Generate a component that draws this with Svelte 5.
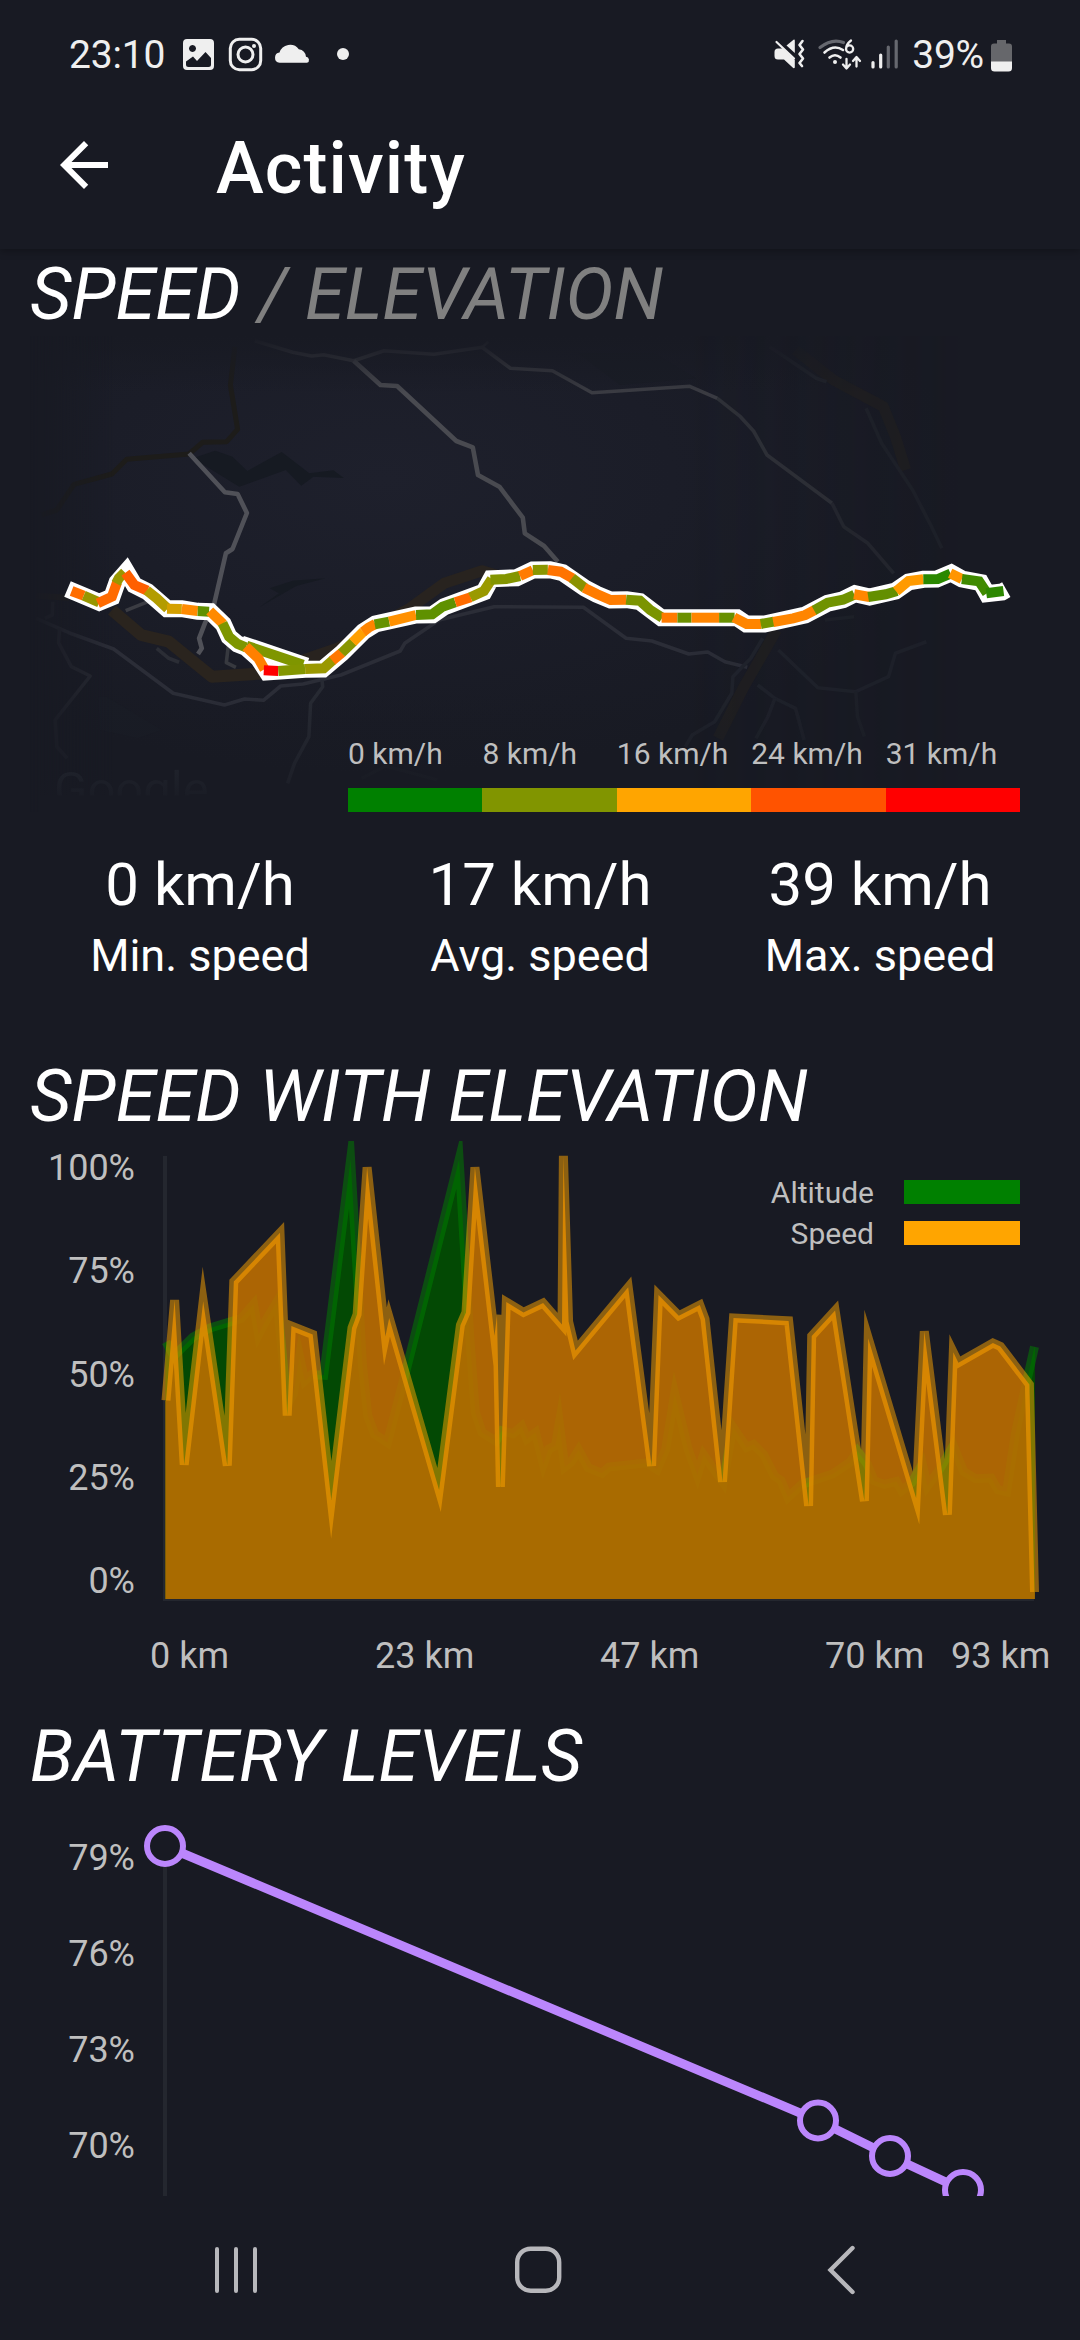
<script>
  const SX = 2.9037;
  const CHART_SY = 2.7034;
  const MAP_SY = 3;

  const toPoints = (pts, sy, top) =>
    pts.map(([x, y]) => `${(x / SX).toFixed(1)},${(y / sy + top).toFixed(1)}`).join(' ');
  const chart = (pts) => toPoints(pts, CHART_SY, 1120);
  const map = (pts) => toPoints(pts, MAP_SY, 330);

  const speed = [
    [482, 758], [507, 487], [535, 932], [590, 490], [660, 934], [679, 437], [813, 305], [834, 799],
    [846, 557], [908, 580], [962, 1027], [1022, 562], [1037, 525], [1066, 128], [1119, 585], [1130, 535],
    [1275, 1000], [1337, 555], [1353, 520], [1379, 128], [1436, 583], [1443, 527], [1453, 992], [1470, 492],
    [1520, 520], [1577, 495], [1632, 553], [1636, 97], [1651, 545], [1671, 623], [1824, 452], [1892, 935],
    [1912, 473], [1971, 529], [2032, 500], [2047, 538], [2098, 978], [2130, 535], [2290, 543], [2348, 1043],
    [2357, 584], [2425, 515], [2510, 1030], [2521, 590], [2660, 1022], [2684, 571], [2751, 1067], [2768, 628],
    [2783, 656], [2883, 603], [2905, 612], [2989, 715], [3004, 1276]
  ];
  const altitude = [
    [482, 600], [505, 638], [560, 587], [610, 562], [700, 537], [736, 498], [751, 580], [770, 545],
    [805, 490], [834, 770], [852, 740], [870, 640], [885, 705], [905, 688], [940, 690], [1018, 107],
    [1043, 500], [1052, 660], [1068, 800], [1088, 850], [1125, 872], [1185, 655], [1333, 107], [1365, 600],
    [1380, 790], [1400, 845], [1440, 868], [1457, 840], [1490, 848], [1515, 828], [1530, 862], [1555, 845],
    [1578, 930], [1593, 890], [1613, 880], [1624, 820], [1640, 938], [1658, 925], [1680, 892], [1708, 940],
    [1748, 955], [1768, 938], [1878, 927], [1908, 945], [1933, 890], [1959, 740], [1998, 890], [2025, 960],
    [2043, 905], [2100, 980], [2128, 830], [2168, 885], [2188, 877], [2218, 905], [2248, 962], [2268, 975],
    [2288, 1020], [2328, 985], [2418, 957], [2468, 925], [2490, 895], [2518, 930], [2538, 975], [2568, 985],
    [2603, 977], [2618, 1002], [2648, 980], [2678, 930], [2693, 990], [2728, 945], [2768, 880], [2798, 950],
    [2833, 970], [2878, 968], [2898, 1000], [2923, 1005], [2948, 850], [2983, 700], [3004, 613]
  ];
  const area = (pts) => chart([[480, 1295], [480, pts[0][1]], ...pts, [3005, pts.at(-1)[1]], [3005, 1295]]);

  const segments = [
    ['#ff6d00', [[208, 783], [243, 797]]],
    ['#979600', [[243, 797], [288, 817]]],
    ['#ff6a00', [[284, 820], [325, 800], [340, 757]]],
    ['#999700', [[337, 760], [345, 745], [362, 727]]],
    ['#ff5f00', [[364, 728], [390, 765], [428, 782]]],
    ['#b39c00', [[426, 781], [455, 805], [487, 836]]],
    ['#d4a000', [[485, 836], [528, 837]]],
    ['#ff8a00', [[528, 837], [574, 843]]],
    ['#5f9000', [[574, 843], [607, 845]]],
    ['#ff8a00', [[609, 843], [648, 882]]],
    ['#7d9600', [[646, 880], [665, 920], [690, 942], [714, 952]]],
    ['#7f9600', [[716, 947], [880, 1004]]],
    ['#ff8000', [[714, 950], [750, 985], [768, 1018]]],
    ['#ff0000', [[766, 1021], [808, 1023]]],
    ['#839600', [[808, 1023], [886, 1017]]],
    ['#9a9800', [[886, 1017], [940, 1015], [967, 990]]],
    ['#ff7600', [[965, 992], [993, 968]]],
    ['#899600', [[992, 969], [1025, 936]]],
    ['#ff9f00', [[1024, 937], [1055, 905]]],
    ['#ff8400', [[1054, 906], [1070, 893], [1090, 882]]],
    ['#659200', [[1088, 883], [1130, 875]]],
    ['#ff9000', [[1130, 875], [1208, 855]]],
    ['#5f9100', [[1208, 855], [1255, 853], [1285, 830], [1322, 817]]],
    ['#ff6b00', [[1322, 817], [1367, 802]]],
    ['#9a9900', [[1366, 802], [1405, 783], [1428, 747]]],
    ['#839500', [[1424, 749], [1470, 747], [1510, 738]]],
    ['#ff7b00', [[1510, 738], [1547, 721]]],
    ['#8a9600', [[1547, 720], [1591, 719]]],
    ['#ff7300', [[1591, 720], [1628, 725], [1663, 745]]],
    ['#8a9200', [[1661, 744], [1698, 774]]],
    ['#ff7c00', [[1696, 773], [1733, 792], [1773, 810], [1818, 809]]],
    ['#7b9400', [[1818, 809], [1858, 812], [1888, 840], [1923, 863]]],
    ['#ff7a00', [[1921, 863], [1967, 863]]],
    ['#6c9000', [[1967, 863], [2008, 863]]],
    ['#ff8500', [[2008, 863], [2088, 863]]],
    ['#689000', [[2088, 863], [2133, 863]]],
    ['#ff8500', [[2131, 862], [2168, 882], [2211, 882]]],
    ['#749400', [[2209, 882], [2247, 875]]],
    ['#ff8500', [[2245, 876], [2303, 865], [2338, 855], [2366, 840]]],
    ['#709200', [[2364, 841], [2403, 818], [2448, 809], [2481, 794]]],
    ['#ff8700', [[2480, 793], [2525, 801]]],
    ['#638f00', [[2521, 801], [2572, 793], [2605, 783]]],
    ['#ff9a00', [[2602, 784], [2638, 753], [2681, 748]]],
    ['#2a8800', [[2681, 748], [2723, 747], [2760, 731]]],
    ['#ff9500', [[2759, 730], [2793, 747]]],
    ['#3f8a00', [[2793, 747], [2843, 754], [2866, 790]]],
    ['#2c8700', [[2864, 790], [2914, 783]]]
  ];
  const casing = [
    [[196, 777], [288, 817], [325, 801], [340, 757], [367, 725], [390, 765], [428, 785], [485, 836], [528, 836],
     [574, 844], [611, 845], [648, 882], [665, 920], [690, 942], [714, 952], [750, 985], [776, 1026], [886, 1018],
     [938, 1017], [993, 969], [1055, 905], [1090, 882], [1208, 855], [1256, 854], [1290, 830], [1405, 786],
     [1426, 746], [1500, 743], [1547, 720], [1597, 719], [1634, 728], [1698, 774], [1733, 793], [1773, 810],
     [1820, 809], [1858, 815], [1920, 863], [2140, 863], [2167, 882], [2220, 882], [2338, 855], [2403, 820],
     [2448, 809], [2483, 791], [2525, 801], [2600, 783], [2638, 756], [2681, 748], [2720, 747], [2762, 729],
     [2793, 747], [2848, 758], [2866, 791], [2910, 786], [2922, 779]],
    [[700, 942], [890, 1008]]
  ];

  const roads = [
    { c: '#3b3c43', w: 4, p: [[740, 32], [850, 67], [905, 78], [940, 74], [1027, 92], [1115, 62], [1260, 73], [1400, 52], [1482, 115], [1604, 122], [1719, 188], [2003, 169], [2083, 205]] },
    { c: '#2f3138', w: 4, p: [[2083, 205], [2150, 260], [2188, 303], [2227, 375], [2416, 520]] },
    { c: '#262830', w: 4, p: [[2416, 520], [2450, 590], [2520, 640], [2595, 730]] },
    { c: '#3b3c43', w: 3, p: [[1400, 52], [1418, 35]] },
    { c: '#494a50', w: 5, p: [[1027, 92], [1105, 165], [1153, 168], [1325, 333], [1373, 352], [1388, 435], [1450, 470], [1518, 563], [1524, 610], [1580, 648], [1620, 695]] },
    { c: '#505158', w: 5, p: [[549, 370], [653, 487], [690, 492], [717, 549], [675, 657], [656, 670], [620, 830], [595, 880], [578, 925], [586, 955], [575, 972]] },
    { c: '#37393f', w: 4, p: [[665, 930], [657, 998], [685, 1012]] },
    { c: '#3b3c43', w: 4, p: [[365, 842], [430, 815]] },
    { c: '#2b2d37', w: 4, p: [[105, 865], [200, 908], [330, 957], [503, 1090], [652, 1125], [710, 1107], [765, 1111], [815, 1068], [880, 1062], [990, 1035], [1162, 963], [1175, 940], [1275, 870], [1435, 830], [1694, 832], [1818, 925], [1893, 933], [2000, 972], [2055, 966], [2105, 995], [2170, 1012]] },
    { c: '#272932', w: 4, p: [[153, 815], [152, 855], [130, 865]] },
    { c: '#272932', w: 4, p: [[173, 895], [170, 938], [207, 1010], [262, 1038], [160, 1170], [165, 1250], [195, 1285]] },
    { c: '#2b2d35', w: 4, p: [[455, 955], [490, 985], [520, 997]] },
    { c: '#272a33', w: 4, p: [[935, 1050], [937, 1070], [902, 1120], [897, 1220], [855, 1300], [835, 1360]] },
    { c: '#20232c', w: 4, p: [[2215, 925], [2180, 985], [2128, 1040], [2125, 1090], [2075, 1175], [2010, 1215], [1990, 1250]] },
    { c: '#1f222b', w: 4, p: [[2200, 1065], [2250, 1105], [2310, 1135], [2335, 1230]] },
    { c: '#1f222b', w: 4, p: [[2250, 1105], [2230, 1160], [2195, 1225]] },
    { c: '#1f222b', w: 4, p: [[2260, 960], [2375, 1073], [2485, 1085], [2580, 1040], [2600, 970], [2690, 935]] },
    { c: '#1e2129', w: 4, p: [[2485, 1085], [2490, 1160], [2510, 1220]] },
    { c: '#22252d', w: 4, p: [[2235, 50], [2370, 145], [2400, 155]] },
    { c: '#1f222a', w: 4, p: [[2515, 235], [2560, 340], [2650, 480], [2700, 580], [2735, 655]] },
    { c: '#1e2129', w: 4, p: [[2395, 870], [2480, 860]] },
    { c: '#1c1f27', w: 4, p: [[1050, 1345], [1120, 1308], [1270, 1350]] }
  ];
  const darkRoads = [
    { c: '#1d1c1a', w: 5, p: [[120, 555], [165, 540], [215, 463], [325, 432], [368, 388], [549, 372], [588, 337], [658, 335], [690, 298], [669, 165], [682, 50]] },
    { c: '#2a241e', w: 12, p: [[325, 840], [410, 915], [490, 935], [615, 1040], [770, 1030]] },
    { c: '#28231f', w: 11, p: [[880, 990], [980, 955], [1190, 835], [1290, 760], [1400, 722], [1440, 735]] },
    { c: '#23211f', w: 6, p: [[105, 797], [200, 803]] },
    { c: '#1f1e20', w: 11, p: [[2255, 900], [2160, 1070], [2085, 1225]] },
    { c: '#1f1e20', w: 11, p: [[2310, 60], [2420, 150], [2565, 230], [2600, 320], [2630, 420]] }
  ];
  const lakes = [
    [[560, 385], [625, 362], [675, 380], [718, 423], [818, 366], [898, 430], [968, 421], [998, 444], [910, 440], [875, 467], [830, 420], [695, 470]],
    [[753, 832], [810, 790], [783, 775], [850, 752], [945, 745], [860, 768]],
    [[285, 1100], [310, 1100], [470, 1200], [400, 1225], [290, 1200]],
    [[1680, 70], [1900, 70], [2020, 145], [1800, 165]]
  ];

  const bands = [
    ['0 km/h', '#008000'], ['8 km/h', '#819500'], ['16 km/h', '#ffa500'], ['24 km/h', '#ff5300'], ['31 km/h', '#ff0000']
  ];
  const stats = [['0 km/h', 'Min. speed'], ['17 km/h', 'Avg. speed'], ['39 km/h', 'Max. speed']];
  const percents = [['100%', 1180], ['75%', 1283], ['50%', 1386.5], ['25%', 1489.5], ['0%', 1593]];
  const distances = [['0 km', 150], ['23 km', 375], ['47 km', 600], ['70 km', 825], ['93 km', 951]];
  const levels = [['79%', 1870], ['76%', 1966], ['73%', 2062], ['70%', 2157.5]];
  const battery = [[165, 1846], [818, 2120.5], [890, 2156], [963, 2190]];
</script>

<div class="screen">
  <div class="status">
    <span>23:10</span>
    <svg class="left" width="170" height="50" viewBox="170 30 170 50">
      <path fill="#efefef" fill-rule="evenodd" d="M187 39h23a4 4 0 0 1 4 4v23a4 4 0 0 1-4 4h-23a4 4 0 0 1-4-4V43a4 4 0 0 1 4-4zm5.500 6a3.500 3.500 0 1 0 .01 0zM186 61.500v3a2.500 2.500 0 0 0 2.500 2.500h20a2.500 2.500 0 0 0 2.500-2.500v-6.500l-5.500-6-8.500 9-4-4.500z" />
      <rect x="230.300" y="39.300" width="30.400" height="30.400" rx="9" fill="none" stroke="#efefef" stroke-width="3" />
      <circle cx="245.500" cy="54.500" r="7.500" fill="none" stroke="#efefef" stroke-width="3" />
      <circle cx="254" cy="46" r="2" fill="#efefef" />
      <path fill="#efefef" d="M279.500 62.800a5.200 5.200 0 0 1 0-10.300 11 11 0 0 1 19.300-3.300 8.500 8.500 0 0 1 7.200 7.600 3.100 3.100 0 0 1 1 6z" />
      <circle cx="343" cy="54" r="6" fill="#efefef" />
    </svg>
    <div class="grow"></div>
    <svg width="134" height="50" viewBox="767 30 134 50">
      <g fill="#efefef">
        <path d="M777 48.500h5L793.800 60v7.500q-.5 1-1.600.5L783 59.500h-6a3.500 3.500 0 0 1-3.500-3.500v-4a3.500 3.500 0 0 1 3.500-3.500z" />
        <path d="M785.500 45.500l7-5.800q1.300-.5 1.300 1V53z" />
      </g>
      <g fill="none" stroke="#efefef" stroke-width="2.600" stroke-linecap="round" stroke-linejoin="round">
        <path d="M775.500 42L793 58.500" stroke-width="2.200" />
        <path d="M801.500 41l-3 4 3.500 4.500-3.500 4.500 3.500 4.500-3.500 4.500 2.500 3" />
        <path d="M823.500 52.500q9.500-8.500 18.500-2.500M828.500 57.500q5.500-4.500 11 0" />
        <path d="M850 40.500q-5 4-5 8.500m0 0a3.600 3.600 0 1 0 7.200 0a3.600 3.600 0 1 0-7.200 0" stroke-width="2.300" />
        <path d="M845.500 59v9m-3.500-3.500l3.500 4 3.500-4M855.500 66.500v-8.500m-3.500 3l3.500-4 3.500 4" stroke-width="2.300" />
        <path d="M872 62.500v4.500M879.700 55v12" stroke-width="3.200" />
      </g>
      <circle cx="834" cy="62" r="2" fill="#efefef" />
      <g fill="none" stroke="#66686f" stroke-width="3.200" stroke-linecap="round">
        <path d="M819 47.500q12-9.500 23.500-5M887.300 47v20M895.200 41v26" />
      </g>
    </svg>
    <span class="pct">39%</span>
    <svg class="cell" width="22" height="32" viewBox="0 0 22 32">
      <path fill="#66676b" d="M6 0h9v3.500h3a3 3 0 0 1 3 3V22H0V6.500a3 3 0 0 1 3-3h3z" />
      <path fill="#efefef" d="M0 21.500h21V28a3.500 3.500 0 0 1-3.500 3.500h-14A3.500 3.500 0 0 1 0 28z" />
    </svg>
  </div>

  <header>
    <svg width="72" height="72" viewBox="0 0 24 24">
      <path fill="#fff" d="M20 11H7.830l5.590-5.590L12 4l-8 8 8 8 1.410-1.410L7.830 13H20z" />
    </svg>
    <h1>Activity</h1>
  </header>

  <main>
    <h2>SPEED <span>/ ELEVATION</span></h2>

    <div class="map">
      <svg width="1080" height="476" viewBox="0 336 1080 476">
        <defs>
          <radialGradient id="ground" cx="0.38" cy="0.3" r="0.62">
            <stop offset="0" stop-color="#1e202c" />
            <stop offset="0.5" stop-color="#1b1d28" />
            <stop offset="1" stop-color="#181a23" />
          </radialGradient>
          <linearGradient id="sides">
            <stop offset="0" stop-color="#000" />
            <stop offset="0.09" stop-color="#fff" />
            <stop offset="0.7" stop-color="#fff" />
            <stop offset="1" stop-color="#bbb" />
          </linearGradient>
          <linearGradient id="ends" x2="0" y2="1">
            <stop offset="0" stop-color="#181a23" />
            <stop offset="0.12" stop-color="#181a23" stop-opacity="0" />
            <stop offset="0.75" stop-color="#181a23" stop-opacity="0" />
            <stop offset="1" stop-color="#181a23" stop-opacity="0.85" />
          </linearGradient>
          <linearGradient id="base" x2="0" y2="1">
            <stop offset="0" stop-color="#181a23" stop-opacity="0" />
            <stop offset="0.5" stop-color="#181a23" stop-opacity="0.7" />
            <stop offset="0.52" stop-color="#181a23" />
          </linearGradient>
          <mask id="fade" maskUnits="userSpaceOnUse" x="30" y="336" width="930" height="476">
            <rect x="30" y="336" width="930" height="476" fill="url(#sides)" />
          </mask>
        </defs>
        <g mask="url(#fade)">
          <rect x="30" y="336" width="930" height="476" fill="url(#ground)" />
          {#each lakes as lake, i}
            <polygon points={map(lake)} fill={i < 2 ? '#161a22' : '#191c25'} />
          {/each}
          {#each darkRoads as r}
            <polyline points={map(r.p)} fill="none" stroke={r.c} stroke-width={r.w} stroke-linejoin="round" />
          {/each}
          {#each roads as r}
            <polyline points={map(r.p)} fill="none" stroke={r.c} stroke-width={r.w - 0.4} stroke-linejoin="round" />
          {/each}
          <rect x="30" y="336" width="930" height="476" fill="url(#ends)" />
        </g>
        <text class="brand" x="54" y="806">Google</text>
        <rect x="40" y="768" width="200" height="54" fill="url(#base)" />
        {#each casing as c}
          <polyline points={map(c)} fill="none" stroke="#fff" stroke-width="17" stroke-linejoin="miter" />
        {/each}
        {#each segments as [color, pts]}
          <polyline points={map(pts)} fill="none" stroke={color} stroke-width="10" />
        {/each}
      </svg>
      <div class="legend">
        {#each bands as [label, color]}
          <div class="band"><span>{label}</span><i style:background={color}></i></div>
        {/each}
      </div>
    </div>

    <div class="stats">
      {#each stats as [value, label]}
        <div><b>{value}</b><span>{label}</span></div>
      {/each}
    </div>

    <h2 class="second">SPEED WITH ELEVATION</h2>
    <svg class="plot" width="1080" height="543" viewBox="0 1141 1080 543">
      <path d="M165 1156V1599H1034" fill="none" stroke="#24272f" stroke-width="4" />
      <polygon points={area(altitude)} fill="rgb(0 80 0 / 0.88)" />
      <polyline points={chart(altitude)} class="trace green" />
      <polygon points={area(speed)} fill="rgb(192 112 0 / 0.88)" />
      <polyline points={chart(speed)} class="trace orange" />
      {#each percents as [label, y]}
        <text class="tick end" x="135" {y}>{label}</text>
      {/each}
      {#each distances as [label, x]}
        <text class="tick" {x} y="1667.500">{label}</text>
      {/each}
      <text class="key end" x="874" y="1203">Altitude</text>
      <rect x="904" y="1180" width="116" height="24" fill="#008000" />
      <text class="key end" x="874" y="1244.300">Speed</text>
      <rect x="904" y="1221" width="116" height="24" fill="#ffa500" />
    </svg>

    <h2 class="third">BATTERY LEVELS</h2>
    <svg class="plot" width="1080" height="398" viewBox="0 1798 1080 398">
      <path d="M165 1846V2196" stroke="#24272f" stroke-width="4" />
      {#each levels as [label, y]}
        <text class="tick end" x="135" {y}>{label}</text>
      {/each}
      <polyline points={battery.join(' ')} fill="none" stroke="#bb86fc" stroke-width="9" />
      {#each battery as [x, y]}
        <circle cx={x} cy={y} r="18" fill="#181a23" stroke="#bb86fc" stroke-width="6" />
      {/each}
    </svg>
  </main>

  <nav>
    <svg width="1080" height="144" viewBox="0 2196 1080 144" fill="none" stroke="#b7b7bb" stroke-width="4.400" stroke-linecap="round">
      <path d="M217 2249v42M236 2249v42M255 2249v42" stroke-width="4" />
      <rect x="517.200" y="2248.700" width="42" height="42" rx="13.500" />
      <path d="M852.500 2248l-22 22 22 22" />
    </svg>
  </nav>
</div>

<style>
  :global(body) { background: #181a23; }
  .screen {
    width: 1080px;
    height: 2340px;
    display: flex;
    flex-direction: column;
    overflow: hidden;
    background: #181a23;
    color: #fff;
    font-family: Roboto, "Liberation Sans", sans-serif;
  }
  svg { display: block; flex: none; }
  .status {
    height: 109px;
    flex: none;
    display: flex;
    align-items: center;
    padding: 0 67px 0 69px;
    color: #efefef;
    font-size: 39px;
    letter-spacing: -0.2px;
  }
  .status span { width: 101px; }
  .status .left { overflow: visible; }
  .grow { flex: 1; }
  .status .pct { width: auto; margin-left: 10px; }
  .cell { margin: 3px 0 0 7px; }
  header {
    height: 140px;
    flex: none;
    box-sizing: border-box;
    display: flex;
    align-items: center;
    padding: 0 0 21px 48px;
    box-shadow: 0 2px 8px rgb(0 0 0 / 0.3);
    clip-path: inset(0 0 -12px 0);
  }
  header svg { margin: 0 96px 7px 0; }
  h1 { margin: 0; font-size: 72px; font-weight: 500; line-height: 84px; letter-spacing: 1.1px; }
  main { height: 1947px; flex: none; overflow: hidden; }
  h2 {
    margin: 0 0 0 30px;
    padding-top: 4px;
    height: 83px;
    font-size: 72px;
    font-weight: 400;
    font-style: italic;
    line-height: 84px;
    white-space: nowrap;
  }
  h2 span { color: #808080; }
  h2.second { margin-top: 68px; letter-spacing: 0.1px; }
  h2.third { margin-top: 27px; letter-spacing: 0.2px; }
  .second + .plot { margin-top: 3px; }
  .map { display: grid; height: 476px; }
  .map > * { grid-area: 1 / 1; }
  .map svg { overflow: visible; }
  .brand { font-size: 49px; fill: #1f222b; }
  .legend { display: flex; width: 672px; align-self: end; justify-self: end; margin-right: 60px; }
  .band { flex: 1; display: flex; flex-direction: column; gap: 16px; white-space: nowrap; }
  .band span { font-size: 30px; line-height: 36px; color: #bfbfbf; }
  .band i { height: 24px; }
  .stats { display: grid; grid-template-columns: repeat(3, 340px); margin: 37px 30px 0; }
  .stats div { display: flex; flex-direction: column; align-items: center; gap: 8px; }
  .stats b { font-size: 60px; font-weight: 400; line-height: 72px; }
  .stats span { font-size: 45px; line-height: 54px; }
  .trace { fill: none; stroke-width: 9; stroke-miterlimit: 10; }
  .green { stroke: rgb(0 128 0 / 0.5); stroke-miterlimit: 13; }
  .orange { stroke: rgb(255 165 0 / 0.5); }
  .tick { font-size: 36px; fill: #bfbfbf; }
  .key { font-size: 30px; fill: #bfbfbf; }
  .end { text-anchor: end; }
  nav { flex: none; }
</style>
